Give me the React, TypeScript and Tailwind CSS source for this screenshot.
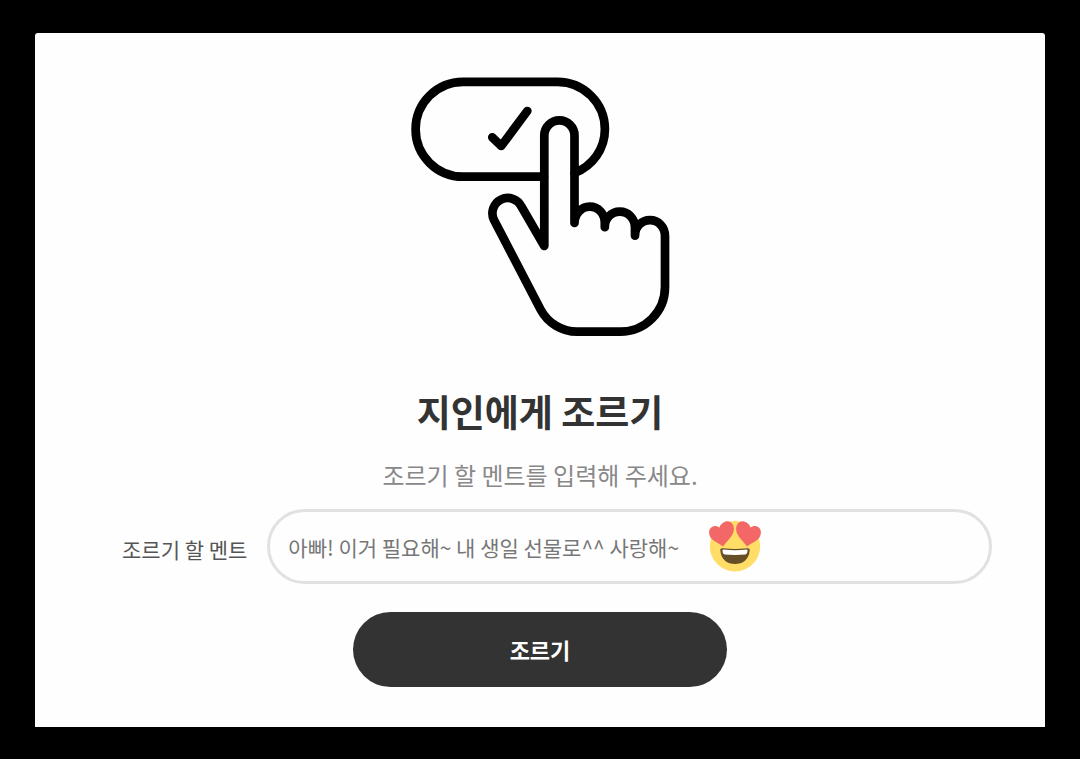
import { useState } from 'react'

function PressIcon() {
  return (
    <svg
      viewBox="0 0 260 262"
      className="h-[262px] w-[260px]"
      fill="none"
      stroke="#000"
      strokeWidth="8.7"
      strokeLinecap="round"
      strokeLinejoin="round"
      aria-hidden="true"
    >
      <path d="M134 100.7H53a47.4 47.4 0 0 1 0-94.8h94.5a47.4 47.4 0 0 1 47.4 47.4c0 19.5-12 36.5-30.4 43.7" />
      <path d="M82.3 61.3l8.9 8.7 26.1-35" />
      <path d="M134.3 170V59.500a15.100 15.100 0 0 1 30.200 0V147c0-9 6.800-16.300 15.200-16.300s15.100 7 15.100 16v4.500c0-9 6.600-15.500 15-15.500s15.200 7 15.200 16v8c0-9 6.600-15.500 15-15.500s15 7 15 16V211c0 25-20 44.700-45 44.700h-43c-15 0-29-8.500-36.300-22L84 144a14.800 14.800 0 0 1 27.400-13.500z" />
    </svg>
  )
}

function HeartEyesIcon() {
  return (
    <svg viewBox="0 0 52 52" className="size-[52px] shrink-0" role="img" aria-label="하트 눈 이모티콘">
      <circle cx="26" cy="25.3" r="25.2" fill="#ffdd67" />
      <path d="M24.500 5.200C23.300 1.200 19.700-.4 16.200.7c-3.200 1-5.400 3.700-5.700 6.100-2-1.900-5.200-2.300-7.600-.8C.2 7.700-.6 11.300.7 14.700 2.600 19.500 8.500 21.500 14 25.400 17.500 20.500 22 17 23.900 12.500c1.100-2.600 1.300-5 .6-7.300z" fill="#f46767" />
      <path d="M27.500 5.200C28.700 1.200 32.300-.4 35.800.7c3.200 1 5.400 3.700 5.700 6.100 2-1.900 5.200-2.300 7.600-.8 2.700 1.700 3.500 5.300 2.200 8.700C49.400 19.500 43.500 21.500 38 25.400 34.500 20.500 30 17 28.100 12.500c-1.100-2.600-1.300-5-.6-7.300z" fill="#f46767" />
      <path d="M11.300 29.500c-.2-1.700.8-2.500 2.400-2.300 8.500.9 16.100.9 24.600 0 1.600-.2 2.600.6 2.400 2.300C39.900 38.700 33.700 43 26 43s-13.900-4.300-14.700-13.500z" fill="#664e27" />
      <path d="M14.600 28.600c7.500.8 15.300.8 22.800 0 .8-.1 1.200.3 1.100 1.200-.1 2.300-.8 3.500-2.300 3.700-6.400.6-14 .6-20.400 0-1.500-.2-2.200-1.400-2.300-3.700 0-.9.300-1.300 1.100-1.200z" fill="#fff" />
    </svg>
  )
}

export default function App() {
  const [message, setMessage] = useState('아빠! 이거 필요해~ 내 생일 선물로^^ 사랑해~')

  return (
    <div className="flex min-h-screen flex-col bg-black px-[35px] pt-[33px] pb-8 font-['Noto_Sans_CJK_KR',sans-serif]">
      <main className="flex grow flex-col items-center rounded-t-[3px] bg-[#fefefe] pt-[43px] pb-10">
        <PressIcon />

        <h1 className="mt-[46px] text-[37px] leading-[54px] font-bold text-[#333]">지인에게 조르기</h1>
        <p className="mt-[19px] text-[24px] leading-9 text-[#888]">조르기 할 멘트를 입력해 주세요.</p>

        <form className="flex w-full flex-col items-center" onSubmit={(e) => e.preventDefault()}>
          <div className="mt-4 flex w-full items-center gap-5 pr-[53px] pl-[87px]">
            <label htmlFor="message" className="shrink-0 pt-1 text-[21px] leading-8 text-[#555]">
              조르기 할 멘트
            </label>
            <div className="flex h-[75px] min-w-0 grow items-center gap-4 rounded-full border-[3px] border-[#e1e1e1] bg-[#fefefe] pl-[18px]">
              <input
                id="message"
                type="text"
                value={message}
                onChange={(e) => setMessage(e.target.value)}
                className="h-10 w-[405px] min-w-0 text-[21px] text-[#777] outline-none"
              />
              <HeartEyesIcon />
            </div>
          </div>

          <button type="submit" className="mt-7 h-[75px] w-[374px] rounded-full bg-[#333] text-[22px] font-bold text-white">
            조르기
          </button>
        </form>
      </main>
    </div>
  )
}
